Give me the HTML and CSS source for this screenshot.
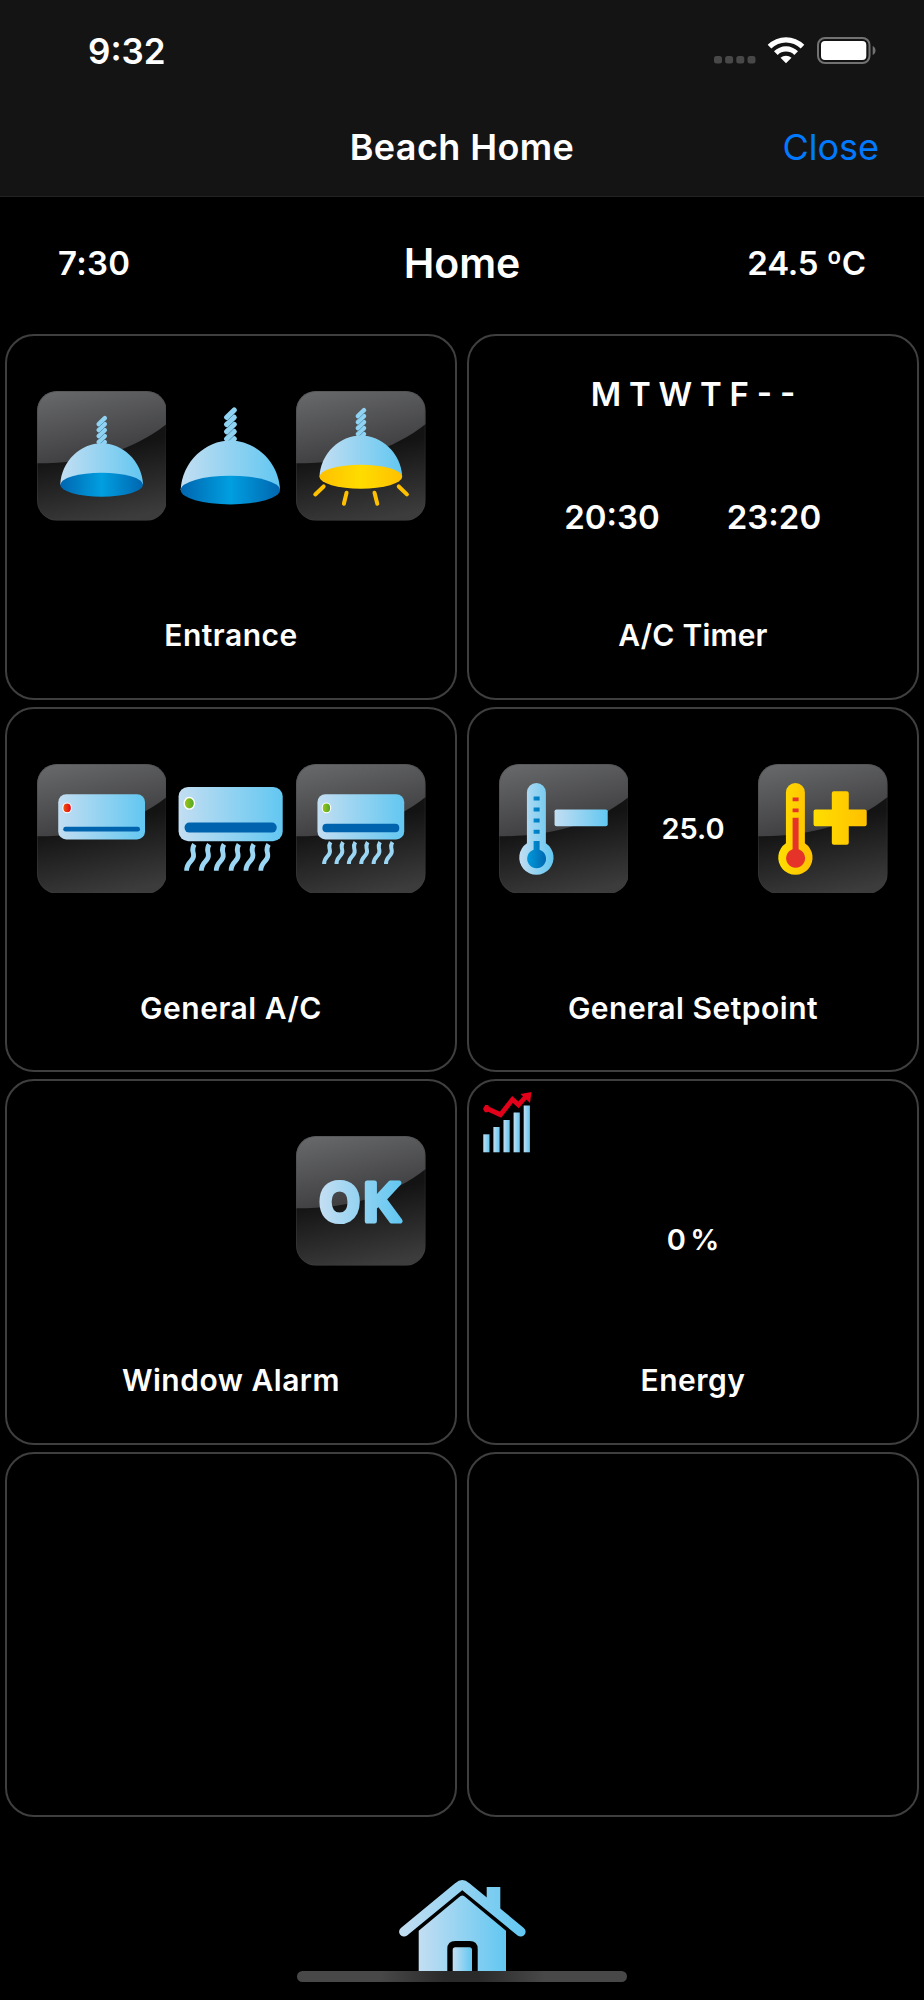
FILE: index.html
```html
<!DOCTYPE html>
<html lang="en">
<head>
    <meta charset="UTF-8">
    <meta name="viewport" content="width=device-width, initial-scale=1.0">
    <title>Beach Home</title>
    <link rel="stylesheet" href="styles.css">
</head>
<body>

    <!-- Shared gradients and shapes -->
    <svg class="defs" width="0" height="0">
        <defs>
            <linearGradient id="blue"><stop offset="0" stop-color="#c3def2"/><stop offset="1" stop-color="#62c7f1"/></linearGradient>
            <linearGradient id="roof" gradientUnits="userSpaceOnUse" x1="0" y1="0" x2="127" y2="0"><stop offset="0" stop-color="#c3def2"/><stop offset="1" stop-color="#62c7f1"/></linearGradient>
            <linearGradient id="deep"><stop offset="0" stop-color="#0066b0"/><stop offset=".5" stop-color="#009fe0"/><stop offset="1" stop-color="#0066b0"/></linearGradient>
            <linearGradient id="bulb"><stop offset="0" stop-color="#0099db"/><stop offset="1" stop-color="#0068b1"/></linearGradient>
            <linearGradient id="glow"><stop offset="0" stop-color="#ffc000"/><stop offset=".5" stop-color="#ffdc00"/><stop offset="1" stop-color="#ffc000"/></linearGradient>
            <linearGradient id="yellow"><stop offset="0" stop-color="#ffde00"/><stop offset="1" stop-color="#ffc000"/></linearGradient>
            <linearGradient id="red"><stop offset="0" stop-color="#f05a0a"/><stop offset="1" stop-color="#e2001a"/></linearGradient>
            <linearGradient id="green"><stop offset="0" stop-color="#a2c617"/><stop offset="1" stop-color="#4aa628"/></linearGradient>
            <linearGradient id="base" x1=".4" y1="0" x2=".6" y2="1"><stop offset=".45" stop-color="#131313"/><stop offset="1" stop-color="#3c3c3c"/></linearGradient>
            <linearGradient id="gloss" x1=".15" y1="0" x2=".55" y2="1"><stop offset="0" stop-color="#67686a"/><stop offset="1" stop-color="#3a3a3c"/></linearGradient>
            <clipPath id="round"><rect width="130" height="130" rx="20"/></clipPath>

            <g id="tile" clip-path="url(#round)">
                <rect width="130" height="130" fill="url(#base)"/>
                <path d="M0 0H130V33C97 59 55 72.5 0 72.5Z" fill="url(#gloss)"/>
                <rect x=".5" y=".5" width="129" height="129" rx="19.5" fill="none" stroke="#444" stroke-opacity=".4"/>
            </g>

            <g id="shade">
                <g stroke="#8fd2f2" stroke-width="4.4" stroke-linecap="round">
                    <path d="M38.5 32.2l6.2-6M38.5 26.2l6.2-6M38.5 20.2l6.2-6M38.5 14.2l6.2-6M38.5 8.2l6.2-6"/>
                    <path d="M38.5 11.4l6.2-6M38.5 17.4l6.2-6M38.5 23.4l6.2-6M38.5 29.4l6.2-6" stroke="#4b87a8" stroke-width=".7"/>
                </g>
                <path d="M0 69C1 45 21 27.5 41.5 27.5S82 45 83 69Z" fill="url(#blue)"/>
            </g>

            <g id="heat" fill="none" stroke-width="4">
                <path id="wave" stroke="#9bd7f4" d="M6.7 70C6.7 61.5 13.3 62.5 12.5 56.5C12 52.5 10.6 52 13.2 48"/>
                <use href="#wave" x="12.4"/><use href="#wave" x="24.8"/><use href="#wave" x="37.2"/>
                <use href="#wave" x="49.6"/><use href="#wave" x="62"/>
            </g>

            <g id="unit-on">
                <rect width="87" height="45.3" rx="8" fill="url(#blue)"/>
                <rect x="5" y="29.7" width="77" height="8.4" rx="4" fill="#0063ad"/>
                <ellipse cx="9" cy="13.7" rx="4.3" ry="4.9" fill="url(#green)" stroke="#fff" stroke-width="1.1"/>
                <use href="#heat"/>
            </g>

            <path id="thermo" d="M28 28.5a9.5 9.5 0 0 1 19 0V79.5a17.2 17.2 0 1 1-19 0Z"/>
        </defs>
    </svg>

    <!-- Header -->
    <div class="header">
        <div class="status-bar">
            <span class="clock">9:32</span>
            <svg class="status-icons" width="164" height="30" viewBox="0 0 164 30">
                <g fill="#484848">
                    <rect x="1" y="20" width="8" height="7.5" rx="2.5"/><rect x="12.1" y="20" width="8" height="7.5" rx="2.5"/>
                    <rect x="23.3" y="20" width="8" height="7.5" rx="2.5"/><rect x="34.5" y="20" width="8" height="7.5" rx="2.5"/>
                </g>
                <g fill="#fff">
                    <path d="M54.7 8.8A26 26 0 0 1 91.3 8.8L87.7 12.4A21 21 0 0 0 58.3 12.4Z"/>
                    <path d="M61 15.3A17 17 0 0 1 85 15.3L81.3 18.9A12 12 0 0 0 64.7 18.9Z"/>
                    <path d="M67.5 21.7A8.5 8.5 0 0 1 78.5 21.7L73 27.2Z"/>
                    <rect x="108" y="5" width="45.3" height="19" rx="4"/>
                </g>
                <rect x="105" y="2" width="51.5" height="25" rx="7" fill="none" stroke="#727272" stroke-width="2"/>
                <path d="M159.7 10v9c3.7-1.5 3.7-7.5 0-9Z" fill="#727272"/>
            </svg>
        </div>
        <div class="nav-bar">
            <span class="nav-title">Beach Home</span>
            <a class="close">Close</a>
        </div>
    </div>

    <!-- Page info -->
    <div class="page-info">
        <span class="page-time">7:30</span>
        <h1>Home</h1>
        <span class="page-temp">24.5 ºC</span>
    </div>

    <!-- Controls -->
    <div class="cards">
        <div class="card">
            <div class="tiles">
                <svg viewBox="0 0 130 130">
                    <use href="#tile"/>
                    <g transform="translate(23.3 25)">
                        <use href="#shade"/>
                        <ellipse cx="41.5" cy="69" rx="41.5" ry="12" fill="url(#deep)"/>
                    </g>
                </svg>
                <svg viewBox="0 0 130 130">
                    <g transform="translate(14.7 16.5) scale(1.2)">
                        <use href="#shade"/>
                        <ellipse cx="41.5" cy="69" rx="41.5" ry="12" fill="url(#deep)"/>
                    </g>
                </svg>
                <svg viewBox="0 0 130 130">
                    <use href="#tile"/>
                    <g transform="translate(23.5 17)">
                        <use href="#shade"/>
                        <ellipse cx="41.5" cy="69" rx="41.5" ry="12" fill="url(#glow)"/>
                    </g>
                    <path d="M27.7 95.7l-8.4 8M50.7 102l-2.7 11M78.7 102l2.8 11M103 95.7l8.2 8" stroke="#ffc000" stroke-width="4" stroke-linecap="round"/>
                </svg>
            </div>
            <div class="label">Entrance</div>
        </div>

        <div class="card timer">
            <div class="days">M T W T F - -</div>
            <div class="times"><span>20:30</span><span>23:20</span></div>
            <div class="label">A/C Timer</div>
        </div>

        <div class="card">
            <div class="tiles">
                <svg viewBox="0 0 130 130">
                    <use href="#tile"/>
                    <rect x="21.3" y="30.3" width="87" height="45.3" rx="8" fill="url(#blue)"/>
                    <rect x="26.3" y="63" width="77" height="4.8" rx="2.4" fill="#0063ad"/>
                    <ellipse cx="30.2" cy="44" rx="4.3" ry="4.9" fill="url(#red)" stroke="#fff" stroke-width="1.1"/>
                </svg>
                <svg viewBox="0 0 130 130">
                    <use href="#unit-on" transform="translate(12.6 23) scale(1.2)"/>
                </svg>
                <svg viewBox="0 0 130 130">
                    <use href="#tile"/>
                    <use href="#unit-on" transform="translate(21.5 30.3)"/>
                </svg>
            </div>
            <div class="label">General A/C</div>
        </div>

        <div class="card">
            <div class="tiles">
                <svg viewBox="0 0 130 130">
                    <use href="#tile"/>
                    <use href="#thermo" fill="url(#blue)"/>
                    <path d="M34.7 32.5h6v4h-6zM34.7 43.7h6v4h-6zM34.7 54.7h6v4h-6zM34.7 66h6v4h-6zM34.7 77.3h6V86a9.5 9.5 0 1 1-6 0Z" fill="url(#bulb)"/>
                    <rect x="55.7" y="45.5" width="53.3" height="17" rx="2" fill="url(#blue)"/>
                </svg>
                <span class="value">25.0</span>
                <svg viewBox="0 0 130 130">
                    <use href="#tile"/>
                    <use href="#thermo" fill="url(#yellow)"/>
                    <path d="M34.7 33.7h6v3.6h-6zM34.7 44.7h6v3.6h-6zM34.7 54h6v31.5a9.5 9.5 0 1 1-6 0Z" fill="#e5332a"/>
                    <path d="M76 27.3h13a2 2 0 0 1 2 2V45.5h16a2 2 0 0 1 2 2v13a2 2 0 0 1-2 2H91V79a2 2 0 0 1-2 2H76a2 2 0 0 1-2-2V62.5H57.7a2 2 0 0 1-2-2v-13a2 2 0 0 1 2-2H74V29.3a2 2 0 0 1 2-2Z" fill="url(#yellow)"/>
                </svg>
            </div>
            <div class="label">General Setpoint</div>
        </div>

        <div class="card">
            <div class="tiles">
                <svg class="last" viewBox="0 0 130 130">
                    <use href="#tile"/>
                    <text class="ok" transform="scale(.95 1.03)" x="25.2 71.5" y="82.3" fill="url(#blue)" stroke="url(#blue)">OK</text>
                </svg>
            </div>
            <div class="label">Window Alarm</div>
        </div>

        <div class="card energy">
            <svg class="chart" width="49" height="61" viewBox="0 0 49 61">
                <g fill="url(#blue)">
                    <rect x=".3" y="42.3" width="6.2" height="18"/><rect x="10.4" y="35" width="6.2" height="25.3"/>
                    <rect x="20.5" y="28" width="6.2" height="32.3"/><rect x="30.6" y="20.5" width="6.2" height="39.8"/>
                    <rect x="40.7" y="13.5" width="6.2" height="46.8"/>
                </g>
                <path d="M3.5 16.3L17.5 22.7L29.5 7.5L35.5 12.8L43 4.5" fill="none" stroke="#e2001a" stroke-width="4.8"/>
                <path d="M37.5 2L48.5 0L47 11ZM0 17l2.2-4h3l1.3 4-2 3.2H2Z" fill="#e2001a"/>
            </svg>
            <span class="value">0 %</span>
            <div class="label">Energy</div>
        </div>

        <div class="card"></div>
        <div class="card"></div>
    </div>

    <!-- Footer -->
    <div class="footer">
        <svg width="127" height="91" viewBox="0 0 127 91">
            <path d="M87.7 7h13.6V36L87.7 25Z" fill="url(#roof)"/>
            <path d="M5 51.7L59.5 6.9Q63.3 3.5 67 6.9L121.7 51.7" fill="none" stroke="url(#roof)" stroke-width="9.8" stroke-linecap="round" stroke-linejoin="round"/>
            <path d="M19.7 50.7L60 17.3Q63.3 13.8 66.6 17.3L107 50.7V91H19.7Z" fill="url(#blue)"/>
            <path d="M48.3 91V69q0-8 8-8h14.4q8 0 8 8v22Z" fill="#000"/>
            <path d="M53.7 91V70q0-2.7 2.7-2.7H70.3q2.7 0 2.7 2.7v21Z" fill="url(#blue)"/>
        </svg>
        <div class="home-indicator"></div>
    </div>

</body>
</html>
```

FILE: styles.css
```css
body {
    margin: 0;
    background-color: #000;
    color: #fff;
    font-family: Inter, "Liberation Sans", sans-serif;
    font-weight: 600;
    height: 2000px;
    overflow: hidden;
}
.defs {
    display: block;
}

/* Header */
.header {
    box-sizing: border-box;
    height: 197px;
    background-color: #141414;
    border-bottom: 1px solid #232323;
}
.status-bar {
    display: flex;
    justify-content: space-between;
    align-items: center;
    height: 102px;
    padding: 0 47px 0 88px;
}
.clock {
    font-size: 35px;
}
.nav-bar {
    display: grid;
    grid-template-columns: 1fr auto 1fr;
    align-items: center;
    height: 90px;
    padding: 0 45px;
}
.nav-title {
    grid-column: 2;
    font-size: 36px;
    letter-spacing: 0.4px;
}
.close {
    justify-self: end;
    color: #007aff;
    font-size: 36px;
    font-weight: 400;
}

/* Page info */
.page-info {
    display: grid;
    grid-template-columns: 1fr auto 1fr;
    align-items: center;
    height: 132px;
    padding: 0 58px;
    margin-bottom: 5px;
    font-size: 33px;
}
.page-info h1 {
    margin: 0;
    font-size: 41px;
    font-weight: 600;
}
.page-time {
    letter-spacing: 0.3px;
}
.page-temp {
    justify-self: end;
    letter-spacing: -0.2px;
}

/* Cards */
.cards {
    display: grid;
    grid-template-columns: 1fr 1fr;
    grid-auto-rows: 365.6px;
    gap: 7px 10px;
    padding: 0 5px;
}
.card {
    position: relative;
    display: flex;
    flex-direction: column;
    box-sizing: border-box;
    padding: 55px 29.5px 0;
    border: 2px solid #3f3f3f;
    border-radius: 29px;
}
.tiles {
    display: grid;
    grid-template-columns: repeat(3, 1fr);
    align-items: center;
    height: 130px;
}
.tiles svg {
    display: block;
    width: 100%;
}
.tiles .last {
    grid-column: 3;
}
.label {
    margin-top: 96px;
    line-height: 36px;
    font-size: 30px;
    letter-spacing: 0.5px;
    text-align: center;
}
.value {
    line-height: 36px;
    font-size: 29px;
    word-spacing: -3px;
    text-align: center;
}
.ok {
    font-family: "Liberation Sans", Arial, sans-serif;
    font-size: 54px;
    font-weight: 700;
    stroke-width: 5px;
    stroke-linejoin: round;
}

/* Timer card */
.timer {
    padding-top: 38px;
    font-size: 33px;
    line-height: 40px;
    text-align: center;
}
.days {
    word-spacing: -0.5px;
}
.times {
    display: grid;
    grid-template-columns: 162px 162px;
    justify-content: center;
    margin-top: 83px;
}
.timer .label {
    margin-top: 80px;
    letter-spacing: 0.2px;
}

/* Energy card */
.energy {
    padding-top: 141px;
}
.energy .label {
    margin-top: 104px;
}
.chart {
    position: absolute;
    left: 14px;
    top: 11px;
}

/* Footer */
.footer {
    display: flex;
    flex-direction: column;
    align-items: center;
    margin-top: 62.6px;
}
.home-indicator {
    width: 330px;
    height: 11px;
    border-radius: 6px;
    background: linear-gradient(to right, #484848 25%, #2a2a2a 45%, #2a2a2a 55%, #484848 75%);
}
```
